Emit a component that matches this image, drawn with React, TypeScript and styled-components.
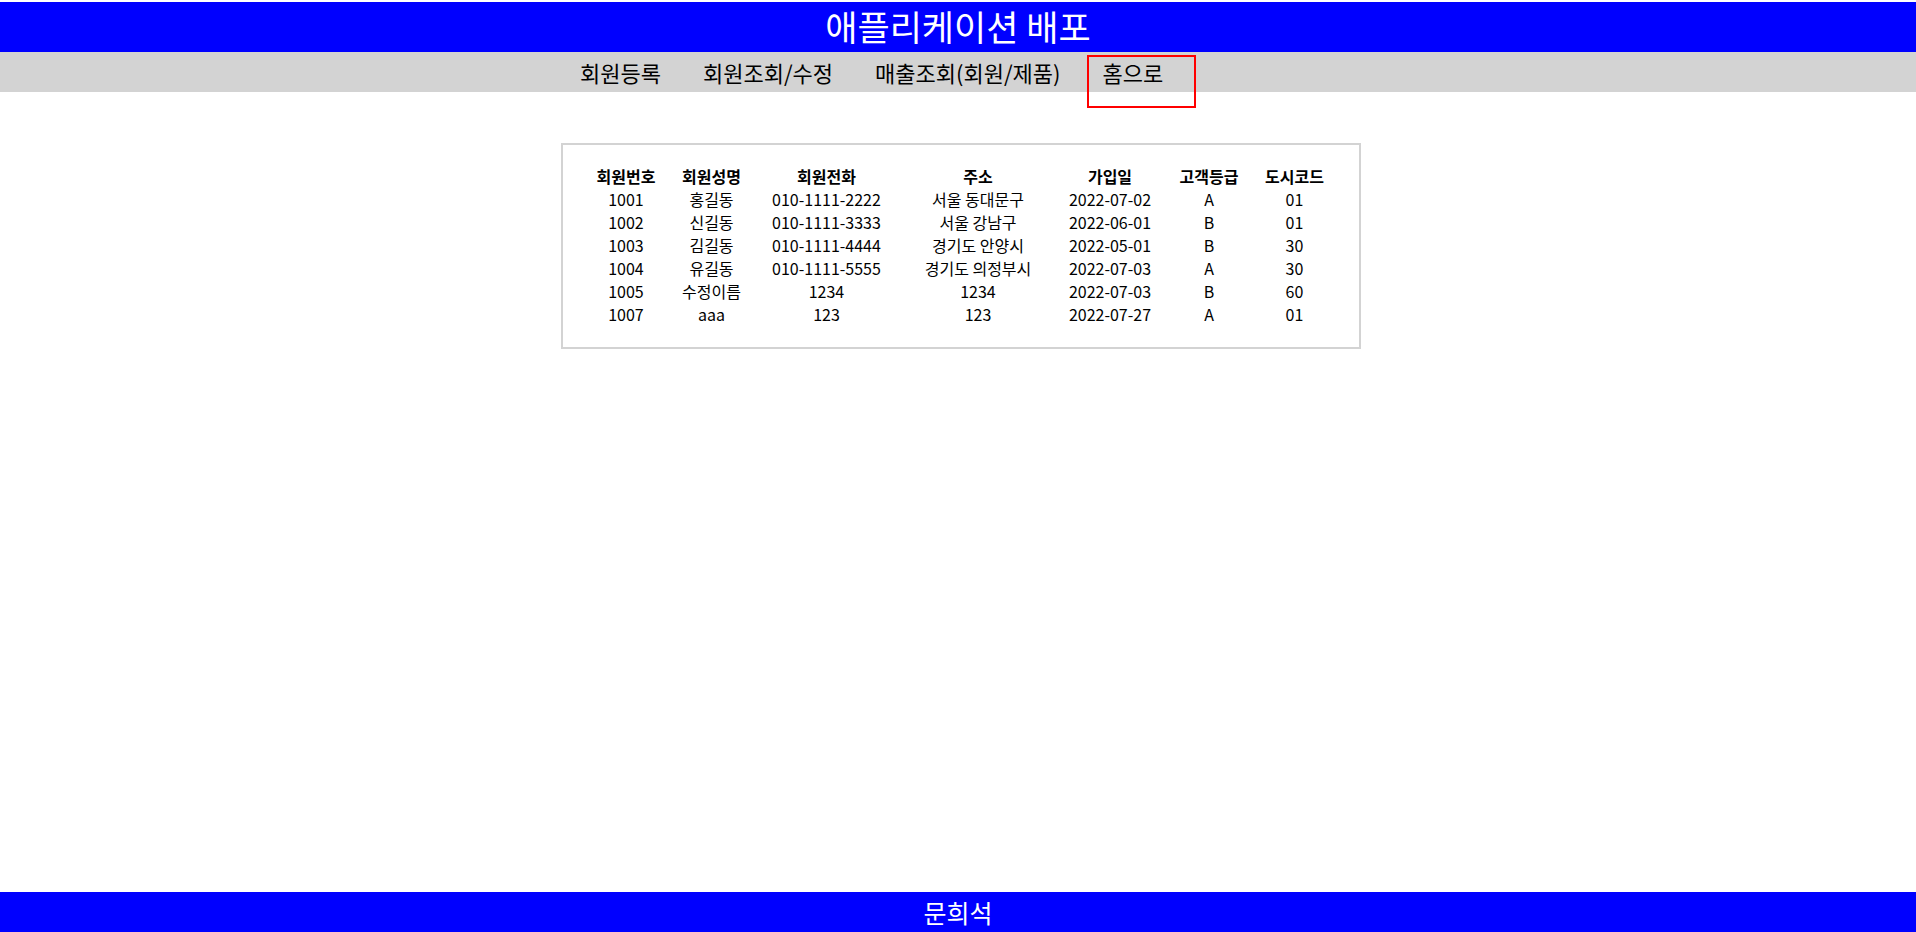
import React from "react";
import styled, { createGlobalStyle } from "styled-components";

const GlobalStyle = createGlobalStyle`
  html, body { margin: 0; padding: 0; background: #ffffff; }
  body {
    font-family: "Noto Sans CJK KR", "Noto Sans", sans-serif;
    color: #000000;
  }
  * { box-sizing: border-box; }
`;

const Page = styled.div`
  min-height: 100vh;
  display: flex;
  flex-direction: column;
  padding-top: 2px;
`;

const Header = styled.header`
  height: 50px;
  background: #0000ff;
  color: #ffffff;
  display: flex;
  align-items: center;
  justify-content: center;
  padding-bottom: 3px;
`;

const Title = styled.h1`
  margin: 0;
  font-size: 35px;
  font-weight: 400;
  line-height: 1;
`;

const Nav = styled.nav`
  height: 40px;
  background: #d3d3d3;
  display: flex;
  align-items: stretch;
  padding-left: 559px;
`;

const NavLink = styled.a<{ $active?: boolean }>`
  position: relative;
  display: flex;
  align-items: center;
  padding: 0 21px 1px;
  font-size: 22px;
  color: #000000;
  text-decoration: none;
  white-space: nowrap;
  &::after {
    content: "";
    display: ${(p) => (p.$active ? "block" : "none")};
    position: absolute;
    left: 6px;
    right: -12px;
    top: 3px;
    height: 49px;
    border: 2px solid #ff0000;
    pointer-events: none;
  }
`;

const Main = styled.main`
  flex: 1;
  padding-top: 51px;
`;

const Box = styled.section`
  width: 800px;
  margin-left: calc(50% - 397px);
  border: 2px solid #d3d3d3;
  padding: 20px 0 21px 23px;
`;

const Table = styled.table`
  table-layout: fixed;
  width: 745px;
  border-collapse: separate;
  border-spacing: 0;
  font-size: 16px;
`;

const Th = styled.th`
  padding: 0;
  height: 23px;
  line-height: 21px;
  font-weight: 700;
  text-align: center;
  white-space: nowrap;
`;

const Td = styled.td`
  padding: 0;
  height: 23px;
  line-height: 21px;
  text-align: center;
  white-space: nowrap;
`;

const Footer = styled.footer`
  height: 40px;
  background: #0000ff;
  color: #ffffff;
  display: flex;
  align-items: center;
  justify-content: center;
  font-size: 25px;
  padding-bottom: 1px;
`;

const colWidths = [80, 91, 139, 164, 100, 98, 73];

const headers = ["회원번호", "회원성명", "회원전화", "주소", "가입일", "고객등급", "도시코드"];

const rows = [
  ["1001", "홍길동", "010-1111-2222", "서울 동대문구", "2022-07-02", "A", "01"],
  ["1002", "신길동", "010-1111-3333", "서울 강남구", "2022-06-01", "B", "01"],
  ["1003", "김길동", "010-1111-4444", "경기도 안양시", "2022-05-01", "B", "30"],
  ["1004", "유길동", "010-1111-5555", "경기도 의정부시", "2022-07-03", "A", "30"],
  ["1005", "수정이름", "1234", "1234", "2022-07-03", "B", "60"],
  ["1007", "aaa", "123", "123", "2022-07-27", "A", "01"],
];

const navItems = ["회원등록", "회원조회/수정", "매출조회(회원/제품)", "홈으로"];

export default function App() {
  return (
    <>
      <GlobalStyle />
      <Page>
        <Header>
          <Title>애플리케이션 배포</Title>
        </Header>
        <Nav>
          {navItems.map((item, i) => (
            <NavLink key={item} href="#" $active={i === navItems.length - 1}>
              {item}
            </NavLink>
          ))}
        </Nav>
        <Main>
          <Box>
            <Table>
              <colgroup>
                {colWidths.map((w, i) => (
                  <col key={i} style={{ width: w }} />
                ))}
              </colgroup>
              <thead>
                <tr>
                  {headers.map((h) => (
                    <Th key={h}>{h}</Th>
                  ))}
                </tr>
              </thead>
              <tbody>
                {rows.map((r) => (
                  <tr key={r[0]}>
                    {r.map((c, j) => (
                      <Td key={j}>{c}</Td>
                    ))}
                  </tr>
                ))}
              </tbody>
            </Table>
          </Box>
        </Main>
        <Footer>문희석</Footer>
      </Page>
    </>
  );
}
